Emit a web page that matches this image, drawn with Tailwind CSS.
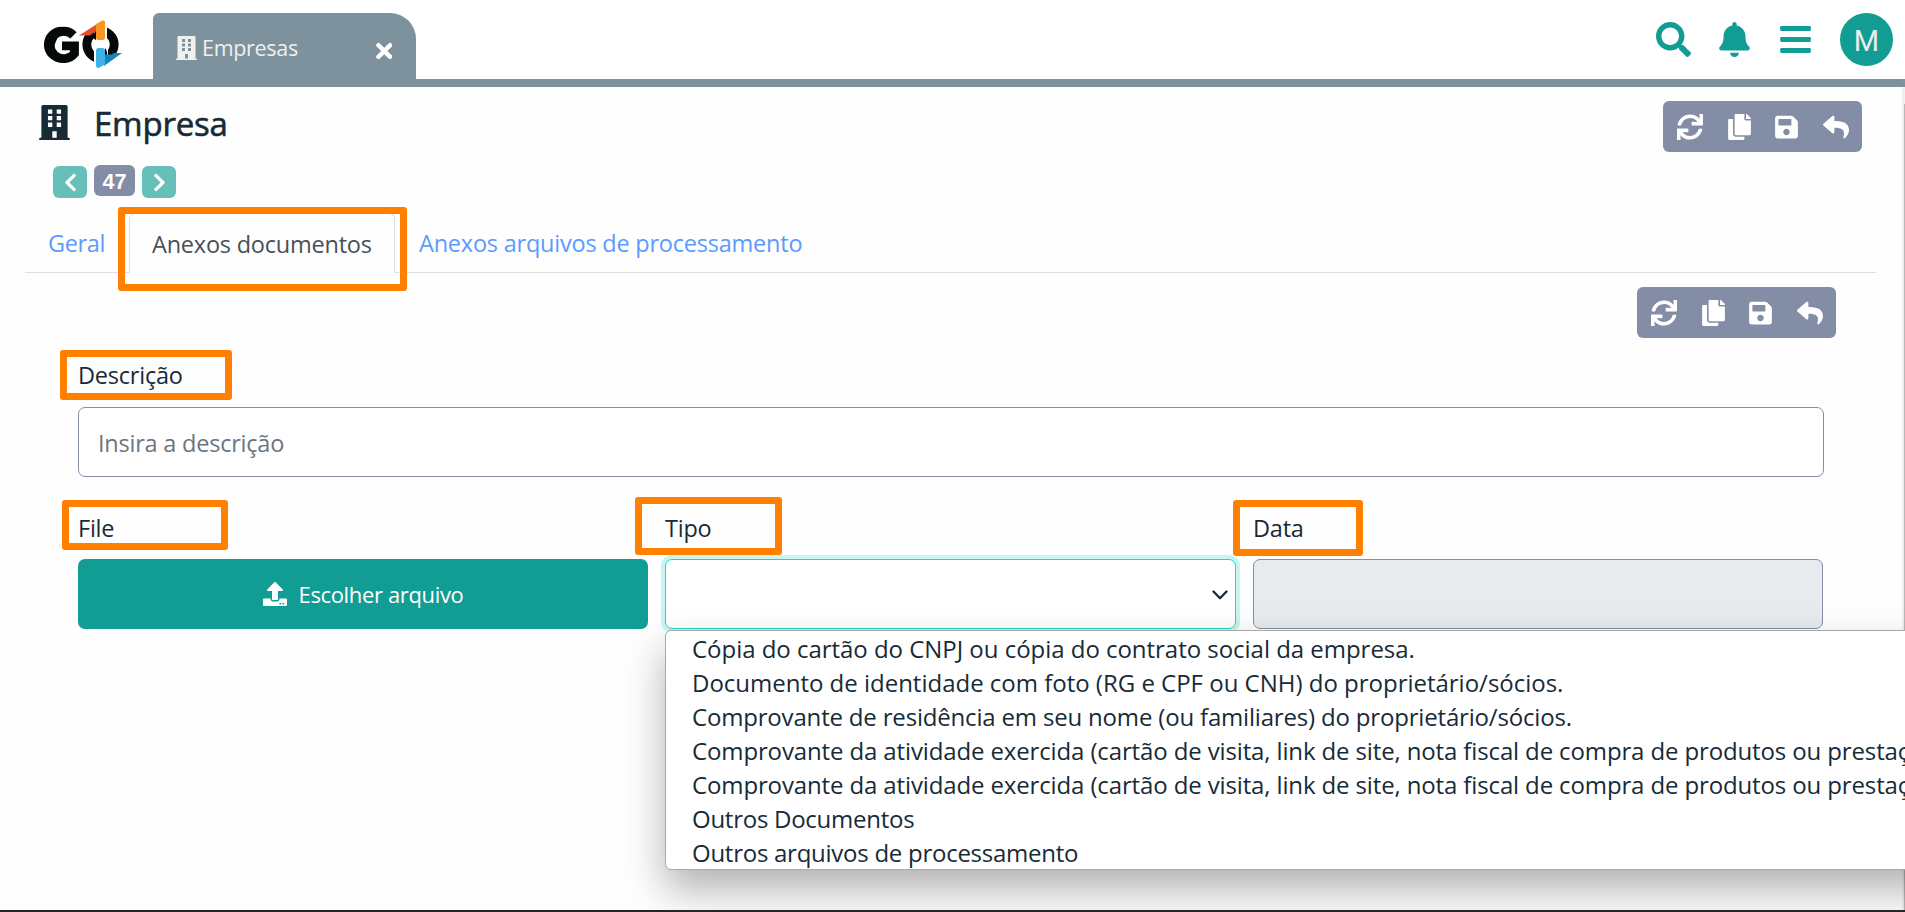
<!DOCTYPE html>
<html lang="pt-BR">
<head>
<meta charset="utf-8">
<title>Empresa</title>
<script src="https://cdn.jsdelivr.net/npm/@tailwindcss/browser@4"></script>
</head>
<body class="relative flex h-screen flex-col overflow-hidden bg-[#fefefe] font-['Open_Sans','Noto_Sans',sans-serif] text-[23.5px] leading-[34px] tracking-[-0.22px] text-[#172b37]">

<svg class="hidden">
  <symbol id="building" viewBox="0 0 448 512"><path fill-rule="evenodd" d="M436 480h-20V24c0-13.3-10.7-24-24-24H56C42.7 0 32 10.700 32 24v456H12c-6.600 0-12 5.400-12 12v20h448v-20c0-6.600-5.400-12-12-12zM128 64h64v64h-64zM256 64h64v64h-64zM128 160h64v64h-64zM256 160h64v64h-64zM128 256h64v64h-64zM256 256h64v64h-64zM192 480v-96h64v96z"/></symbol>
  <symbol id="sync" viewBox="0 0 512 512"><path d="M440.650 12.570l4 82.770A247.160 247.160 0 0 0 255.830 8C134.730 8 33.910 94.920 12.290 209.820A12 12 0 0 0 24.090 224h49.050a12 12 0 0 0 11.670-9.260 175.910 175.910 0 0 1 317-56.940l-101.460-4.860a12 12 0 0 0-12.570 12v47.410a12 12 0 0 0 12 12H500a12 12 0 0 0 12-12V12a12 12 0 0 0-12-12h-47.370a12 12 0 0 0-11.980 12.570zM255.830 432a175.610 175.610 0 0 1-146-77.800l101.800 4.870a12 12 0 0 0 12.570-12v-47.400a12 12 0 0 0-12-12H12a12 12 0 0 0-12 12V500a12 12 0 0 0 12 12h47.350a12 12 0 0 0 12-12.600l-4.150-82.570A247.170 247.170 0 0 0 255.830 504c121.110 0 221.930-86.920 243.550-201.820a12 12 0 0 0-11.800-14.180h-49.050a12 12 0 0 0-11.670 9.260A175.860 175.860 0 0 1 255.830 432z"/></symbol>
  <symbol id="copy" viewBox="0 0 448 512"><path d="M320 448v40c0 13.255-10.745 24-24 24H24c-13.255 0-24-10.745-24-24V120c0-13.255 10.745-24 24-24h72v296c0 30.879 25.121 56 56 56h168zm0-344V0H152c-13.255 0-24 10.745-24 24v368c0 13.255 10.745 24 24 24h272c13.255 0 24-10.745 24-24V128H344c-13.200 0-24-10.800-24-24zm120.971-31.029L375.029 7.029A24 24 0 0 0 358.059 0H352v96h96v-6.059a24 24 0 0 0-7.029-16.970z"/></symbol>
  <symbol id="save" viewBox="0 0 448 512"><path d="M433.941 129.941l-83.882-83.882A48 48 0 0 0 316.118 32H48C21.490 32 0 53.490 0 80v352c0 26.510 21.490 48 48 48h352c26.510 0 48-21.490 48-48V163.882a48 48 0 0 0-14.059-33.941zM224 416c-35.346 0-64-28.654-64-64 0-35.346 28.654-64 64-64s64 28.654 64 64c0 35.346-28.654 64-64 64zm96-304.520V212c0 6.627-5.373 12-12 12H76c-6.627 0-12-5.373-12-12V108c0-6.627 5.373-12 12-12h228.520c3.183 0 6.235 1.264 8.485 3.515l3.480 3.480A11.996 11.996 0 0 1 320 111.480z"/></symbol>
  <symbol id="reply" viewBox="0 0 512 512"><path d="M8.309 189.836L184.313 37.851C199.719 24.546 224 35.347 224 56.015v80.053c160.629 1.839 288 34.032 288 186.258 0 61.441-39.581 122.309-83.333 154.132-13.653 9.931-33.111-2.533-28.077-18.631 45.344-145.012-21.507-183.510-176.590-185.742V360c0 20.700-24.300 31.453-39.687 18.164l-176.004-152c-11.071-9.562-11.086-26.753 0-36.328z"/></symbol>
  <symbol id="chevron" viewBox="0 0 320 512"><path d="M34.520 239.030L228.870 44.690c9.370-9.370 24.570-9.370 33.940 0l22.670 22.670c9.360 9.360 9.370 24.520.040 33.900L131.490 256l154.020 154.750c9.340 9.380 9.320 24.540-.040 33.900l-22.670 22.670c-9.370 9.370-24.570 9.370-33.940 0L34.520 272.970c-9.370-9.370-9.370-24.570 0-33.940z"/></symbol>
</svg>

<header class="flex h-[87px] shrink-0 items-end justify-between border-b-8 border-[#7d929c] bg-white">
  <div class="flex h-full items-end">
    <svg class="ml-[40px] h-[79px] w-[113px]" viewBox="40 0 113 79">
      <path d="M73.500 35.300A13.700 13.700 0 1 0 74.500 53.500V45.800H62" fill="none" stroke="#060909" stroke-width="8.800"/>
      <path d="M61.800 26.700a17.900 17.900 0 0 0 0 35.800q-7-4-9-13z" fill="#060909"/>
      <circle cx="100.500" cy="44.600" r="13.700" fill="none" stroke="#060909" stroke-width="8.800"/>
      <path d="M94 19h13v23H94zM94 47h14v20H94z" fill="#fff"/>
      <path d="M96 30.300V40q-3-1-3-5zM105 59V48q3 3 2 10z" fill="#060909"/>
      <path d="M79 35.500L97 24v6L90 35.500z" fill="#ee4a2b"/>
      <path d="M96 24l6.500-3.500q2.500-.5 2.500 1.500v15.500q0 2.500-2.500 2.500H98.500q-2.500 0-2.500-2.500z" fill="#f79423"/>
      <path d="M122 53L104 66V54.500h7.500l2.500-1.500z" fill="#1b82b5"/>
      <path d="M96 50.500q0-2.500 2.500-2.500h4q2.500 0 2.500 2.500v14l-6.500 3.500q-2.500 0-2.500-2z" fill="#3eb1e7"/>
    </svg>
    <div class="flex h-[66px] w-[263px] items-center rounded-tl-[6px] rounded-tr-[26px] bg-[#7d929c] pr-[24px] pl-[23px] text-[#f0f0f0]">
      <svg class="mt-[4px] h-[24px] w-[21px]" fill="currentColor"><use href="#building"/></svg>
      <span class="mt-[4px] ml-[5px] text-[21.500px] tracking-[-0.300px]">Empresas</span>
      <svg class="mt-[10px] ml-auto h-[24px] w-[16.500px]" viewBox="0 0 352 512" fill="#fff"><path d="M242.720 256l100.070-100.070c12.280-12.280 12.280-32.190 0-44.480l-22.240-22.240c-12.280-12.280-32.190-12.280-44.480 0L176 189.280 75.930 89.210c-12.280-12.280-32.190-12.280-44.480 0L9.210 111.450c-12.280 12.280-12.280 32.190 0 44.480L109.280 256 9.210 356.070c-12.280 12.280-12.280 32.190 0 44.480l22.240 22.240c12.280 12.280 32.200 12.280 44.480 0L176 322.720l100.070 100.070c12.280 12.280 32.200 12.280 44.480 0l22.240-22.240c12.280-12.280 12.280-32.190 0-44.480L242.720 256z"/></svg>
    </div>
  </div>
  <div class="flex h-[79px] items-center pr-[12px] text-[#129d94]">
    <svg class="mr-[28px] h-[35px] w-[35px]" viewBox="0 0 512 512" fill="currentColor"><path d="M505 442.700L405.300 343c-4.500-4.500-10.600-7-17-7H372c27.600-35.300 44-79.700 44-128C416 93.100 322.900 0 208 0S0 93.100 0 208s93.100 208 208 208c48.300 0 92.700-16.400 128-44v16.300c0 6.400 2.500 12.500 7 17l99.700 99.700c9.400 9.400 24.600 9.400 33.900 0l28.300-28.300c9.400-9.400 9.400-24.600.1-34zM208 336c-70.700 0-128-57.200-128-128 0-70.700 57.200-128 128-128 70.700 0 128 57.200 128 128 0 70.700-57.200 128-128 128z"/></svg>
    <svg class="mr-[30px] h-[35px] w-[31px]" viewBox="0 0 448 512" fill="currentColor"><path d="M224 512c35.320 0 63.970-28.650 63.970-64H160.030c0 35.350 28.650 64 63.970 64zm215.390-149.710c-19.320-20.760-55.470-51.990-55.470-154.290 0-77.700-54.480-139.900-127.940-155.160V32c0-17.670-14.320-32-31.980-32s-31.980 14.330-31.980 32v20.840C118.560 68.100 64.080 130.300 64.080 208c0 102.300-36.150 133.530-55.470 154.290-6 6.450-8.660 14.160-8.610 21.710.11 16.400 12.980 32 32.100 32h383.800c19.120 0 32-15.600 32.100-32 .05-7.550-2.610-15.270-8.610-21.710z"/></svg>
    <svg class="mr-[29px] h-[35px] w-[31px]" viewBox="0 0 448 512" fill="currentColor"><rect y="60" width="448" height="72" rx="16"/><rect y="220" width="448" height="72" rx="16"/><rect y="380" width="448" height="72" rx="16"/></svg>
    <div class="flex size-[53px] items-center justify-center rounded-full bg-[#129d94] font-['Roboto',sans-serif] text-[29px] tracking-normal text-[#ececec]"><span class="mt-[3px]">M</span></div>
  </div>
</header>

<main class="flex grow flex-col">
  <div class="flex h-[76px] justify-between pr-[43px] pl-[39px]">
    <div class="flex items-start">
      <svg class="mt-[18px] h-[35px] w-[31px]" fill="currentColor"><use href="#building"/></svg>
      <h1 class="mt-[15px] ml-[24px] text-[33px] leading-[44px] font-medium [-webkit-text-stroke:0.6px_#172b37]">Empresa</h1>
    </div>
    <div class="mt-[14px] flex h-[51px] w-[199px] items-center justify-between rounded-[6px] bg-[#838ea6] pr-[13px] pl-[14px] text-white">
      <svg class="size-[26px]" fill="currentColor"><use href="#sync"/></svg>
      <svg class="h-[26px] w-[23px]" fill="currentColor"><use href="#copy"/></svg>
      <svg class="h-[26px] w-[23px]" fill="currentColor"><use href="#save"/></svg>
      <svg class="size-[26px]" fill="currentColor"><use href="#reply"/></svg>
    </div>
  </div>

  <div class="flex h-[44px] gap-[7px] pt-[2px] pl-[53px] text-white">
    <div class="mt-px flex h-[32px] w-[34px] items-center justify-center rounded-[6px] bg-[#66bfb8]"><svg class="h-[21px] w-[13px]" fill="currentColor"><use href="#chevron"/></svg></div>
    <div class="flex h-[31px] w-[41px] items-center justify-center rounded-[6px] bg-[#838ea6] font-['Liberation_Sans',sans-serif] text-[21.500px] font-bold tracking-normal"><span class="mt-[2px]">47</span></div>
    <div class="mt-px flex h-[32px] w-[34px] items-center justify-center rounded-[6px] bg-[#66bfb8]"><svg class="h-[21px] w-[13px] rotate-180" fill="currentColor"><use href="#chevron"/></svg></div>
  </div>

  <nav class="mr-[29px] ml-[25px] mt-[6px] flex h-[60px] items-end border-b border-[#dcdfe3] text-[#5c9aff]">
    <a class="h-[59px] w-[104px] pt-[13px] pl-[23px] tracking-[-0.350px]">Geral</a>
    <a class="relative -mb-px h-[60px] w-[266px] rounded-t-[6px] border border-b-0 border-[#dcdfe3] bg-[#fefefe] pt-[13px] pl-[22px] text-[#495057]">Anexos documentos
      <span class="absolute -top-[7px] -left-[12px] h-[84px] w-[289px] rounded-[3px] border-[7px] border-[#ff8000]"></span>
    </a>
    <a class="h-[59px] pt-[13px] pl-[24px]">Anexos arquivos de processamento</a>
  </nav>

  <section class="flex flex-col pr-[81px] pl-[78px]">
    <div class="mt-[14px] mr-[-12px] flex h-[51px] w-[199px] items-center justify-between self-end rounded-[6px] bg-[#838ea6] pr-[13px] pl-[14px] text-white">
      <svg class="size-[26px]" fill="currentColor"><use href="#sync"/></svg>
      <svg class="h-[26px] w-[23px]" fill="currentColor"><use href="#copy"/></svg>
      <svg class="h-[26px] w-[23px]" fill="currentColor"><use href="#save"/></svg>
      <svg class="size-[26px]" fill="currentColor"><use href="#reply"/></svg>
    </div>

    <label class="relative mt-[20px] h-[49px]">Descrição
      <span class="absolute -top-[8px] -left-[18px] h-[50px] w-[172px] rounded-[3px] border-[7px] border-[#ff8000]"></span>
    </label>
    <div class="flex h-[70px] items-center rounded-[7px] border border-[#838ea6] bg-white pt-[2px] pl-[19px] text-[#6c757d]"><span>Insira a descrição</span></div>

    <div class="mt-[34px] grid grid-cols-[570px_571px_570px] gap-x-[17px]">
      <div>
        <label class="relative block h-[48px]">File
          <span class="absolute -top-[11px] -left-[16px] h-[50px] w-[166px] rounded-[3px] border-[7px] border-[#ff8000]"></span>
        </label>
        <div class="flex h-[70px] items-center justify-center rounded-[7px] bg-[#129d94] text-[22px] tracking-[-0.350px] text-white">
          <svg class="size-[24px]" viewBox="0 0 512 512" fill="currentColor"><path d="M296 384h-80c-13.300 0-24-10.700-24-24V192h-87.700c-17.800 0-26.700-21.500-14.100-34.100L242.300 5.700c7.500-7.500 19.800-7.500 27.300 0l152.200 152.200c12.600 12.600 3.700 34.100-14.100 34.100H320v168c0 13.300-10.700 24-24 24zm216-8v112c0 13.300-10.700 24-24 24H24c-13.300 0-24-10.700-24-24V376c0-13.300 10.700-24 24-24h136v8c0 30.900 25.100 56 56 56h80c30.900 0 56-25.100 56-56v-8h136c13.300 0 24 10.700 24 24zm-124 88c0-11-9-20-20-20s-20 9-20 20 9 20 20 20 20-9 20-20zm64 0c0-11-9-20-20-20s-20 9-20 20 9 20 20 20 20-9 20-20z"/></svg>
          <span class="ml-[12px]">Escolher arquivo</span>
        </div>
      </div>
      <div class="relative">
        <label class="relative z-10 block h-[48px]">Tipo
          <span class="absolute -top-[14px] -left-[30px] h-[58px] w-[147px] rounded-[3px] border-[7px] border-[#ff8000]"></span>
        </label>
        <div class="flex h-[70px] items-center justify-end rounded-[7px] border border-[#22d3c5] bg-white pt-[2px] pr-[7px] ring-4 ring-[#c7f5f0]">
          <svg class="h-[10px] w-[16px]" viewBox="0 0 16 10" fill="none" stroke="#172b37" stroke-width="2.300" stroke-linecap="round" stroke-linejoin="round"><path d="M1.500 1.500L8 8.200l6.500-6.700"/></svg>
        </div>
        <div class="absolute top-[119px] left-0 z-20 h-[240px] w-[1290px] rounded-[6px] border border-[#a8a8a8] bg-white pl-[26px] text-[24px] whitespace-nowrap shadow-[0_20px_40px_rgba(0,0,0,0.300)]">
          <div class="mt-[1px] tracking-[-0.030px]">Cópia do cartão do CNPJ ou cópia do contrato social da empresa.</div>
          <div class="tracking-[-0.010px]">Documento de identidade com foto (RG e CPF ou CNH) do proprietário/sócios.</div>
          <div class="tracking-[-0.180px]">Comprovante de residência em seu nome (ou familiares) do proprietário/sócios.</div>
          <div class="tracking-[-0.130px]">Comprovante da atividade exercida (cartão de visita, link de site, nota fiscal de compra de produtos ou prestação</div>
          <div class="tracking-[-0.130px]">Comprovante da atividade exercida (cartão de visita, link de site, nota fiscal de compra de produtos ou prestação</div>
          <div class="tracking-[-0.260px]">Outros Documentos</div>
          <div class="tracking-[-0.260px]">Outros arquivos de processamento</div>
        </div>
      </div>
      <div>
        <label class="relative block h-[48px]">Data
          <span class="absolute -top-[11px] -left-[20px] h-[56px] w-[130px] rounded-[3px] border-[7px] border-[#ff8000]"></span>
        </label>
        <div class="h-[70px] rounded-[7px] border border-[#838ea6] bg-[#e7ebee]"></div>
      </div>
    </div>
  </section>
</main>

<div class="absolute top-[87px] right-0 bottom-0 w-[3px] bg-[#f0f0f0] pt-[17px]"><div class="ml-auto h-full w-px bg-[#b8b8b8]"></div></div>
<div class="absolute bottom-0 left-0 z-30 h-[2px] w-full bg-[#24262d]"></div>
</body>
</html>
